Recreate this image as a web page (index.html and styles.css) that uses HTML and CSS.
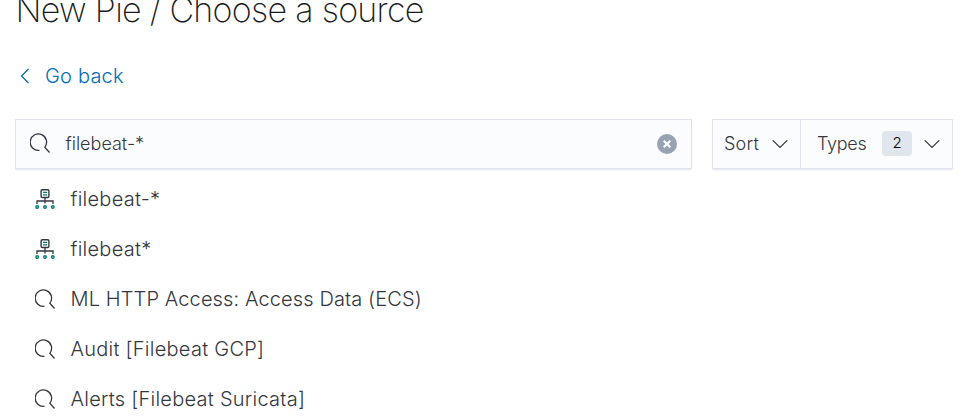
FILE: index.html
```html
<!DOCTYPE html>
<html lang="en">
<head>
<meta charset="utf-8">
<title>New Pie</title>
<link rel="stylesheet" href="styles.css">
</head>
<body>
<svg class="sprite" aria-hidden="true">
<symbol id="search" viewBox="0 0 20 20"><path d="M9.500 17.300A8.200 8.200 0 1 1 14.800 14.300L19.500 19.500" fill="none" stroke="currentColor" stroke-width="1.300"/></symbol>
<symbol id="down" viewBox="0 0 16 16"><path d="M1.800 5 8 11l6.200-6" fill="none" stroke="currentColor" stroke-width="1.100" stroke-linecap="round"/></symbol>
<symbol id="pattern" viewBox="0 0 20 20"><g fill="none"><rect x="6.100" y=".7" width="7.800" height="7.800" rx="1.200" stroke="#343741" stroke-width="1.400"/><path d="M10 8.500v6M2 15v-3h16v3" stroke="#343741" stroke-width="1.300"/><path d="M8 3.400h4M8 5.900h4" stroke="#017d73" stroke-width="1.300"/><g stroke="#017d73" stroke-width="1.400"><circle cx="2.200" cy="18" r="1.300"/><circle cx="10" cy="18" r="1.300"/><circle cx="17.800" cy="18" r="1.300"/></g></g></symbol>
</svg>
<main class="page">
<h1 class="title">New Pie / Choose a source</h1>
<a class="back"><svg class="back-icon" viewBox="0 0 10 16"><path d="M8.500 1 1.500 8l7 7" fill="none" stroke="currentColor" stroke-width="1.200"/></svg><span>Go back</span></a>
<div class="toolbar">
<div class="field"><svg class="field-icon"><use href="#search"/></svg><span class="query">filebeat-*</span><svg class="clear" viewBox="0 0 20 20"><circle cx="10" cy="10" r="10" fill="#98a2b3"/><path d="m6.700 6.700 6.600 6.600m0-6.600-6.600 6.600" stroke="#fff" stroke-width="2"/></svg></div>
<div class="filters"><div class="filter sort"><span class="sort-label">Sort</span><svg class="arrow"><use href="#down"/></svg></div><div class="filter types"><span class="types-label">Types</span><span class="badge">2</span><svg class="arrow"><use href="#down"/></svg></div></div>
</div>
<ul class="list">
<li class="item"><svg class="item-icon"><use href="#pattern"/></svg><span>filebeat-*</span></li>
<li class="item"><svg class="item-icon"><use href="#pattern"/></svg><span>filebeat*</span></li>
<li class="item item-long"><svg class="item-icon"><use href="#search"/></svg><span>ML HTTP Access: Access Data (ECS)</span></li>
<li class="item"><svg class="item-icon"><use href="#search"/></svg><span>Audit [Filebeat GCP]</span></li>
<li class="item"><svg class="item-icon"><use href="#search"/></svg><span>Alerts [Filebeat Suricata]</span></li>
</ul>
</main>
</body>
</html>
```
FILE: styles.css
```css
* { box-sizing: border-box; }
body { margin: 0; background: #fff; color: #343741; font-family: Inter, sans-serif; font-weight: 340; height: 418px; overflow: hidden; }
.sprite { display: none; }
.page { padding: 0 11px 0 15px; }
.title { margin: -10px 0 0; padding-left: 0.5px; color: #1a1c21; font-size: 34px; line-height: 40px; font-weight: 255; letter-spacing: -0.7px; }
.back { display: flex; align-items: center; margin-top: 31px; height: 30px; padding-left: 5px; gap: 15px; color: #006bb4; font-size: 20px; font-weight: 365; letter-spacing: 0.2px; }
.back-icon { width: 10px; height: 16px; }
.toolbar { display: flex; gap: 20px; margin-top: 28px; height: 50px; }
.field, .filters { border: 1px solid #e0e3ee; box-shadow: 0 2px 2px -1px #98a2b34d; background: #fbfcfd; }
.field { width: 677px; display: flex; align-items: center; padding: 0 14px; }
.field-icon { width: 20px; height: 20px; margin: -2px 15.5px 0 0; }
.query { font-size: 18px; flex: 1; }
.query, .filter { padding-bottom: 1px; }
.clear { width: 20px; height: 20px; }
.filters { width: 241px; display: flex; font-size: 18px; }
.filter { display: flex; align-items: center; }
.sort { width: 88px; padding-left: 11px; gap: 11px; border-right: 1px solid #e0e3ee; }
.sort-label { width: 36px; letter-spacing: 0.2px; }
.types { flex: 1; padding-left: 16px; }
.types-label { width: 50px; letter-spacing: -0.3px; }
.arrow { width: 18px; height: 18px; }
.badge { width: 30px; height: 25px; margin: 0 11px 0 15px; border-radius: 4px; background: #e0e5ee; color: #000; font-size: 15px; line-height: 24px; text-align: center; }
.list { list-style: none; margin: 5px 0 0; padding: 0; }
.item { display: flex; align-items: center; height: 50px; padding-left: 20px; gap: 15.5px; font-size: 20px; letter-spacing: 0.26px; }
.item-long { letter-spacing: 0.12px; }
.item-icon { width: 20px; height: 20px; }
```
